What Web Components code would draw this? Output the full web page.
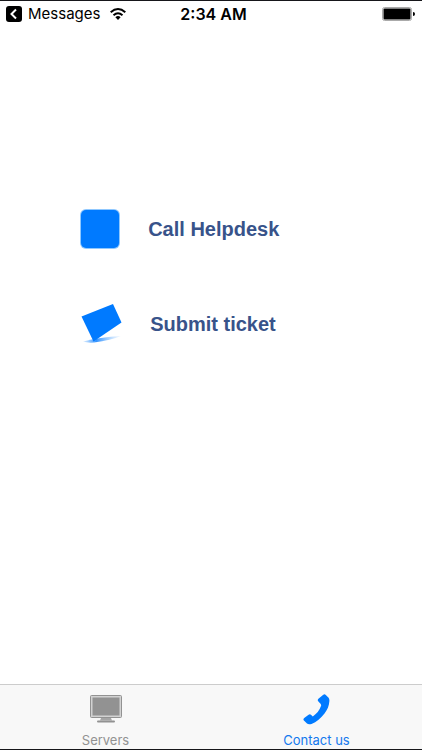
<!DOCTYPE html>
<html lang="en">
<head>
<meta charset="utf-8">
<meta name="viewport" content="width=device-width, initial-scale=1">
<title>Contact us</title>
<style>
html, body { margin: 0; }
body { font-family: Inter, "Liberation Sans", sans-serif; background: #fff; }
</style>
</head>
<body>
<helpdesk-app></helpdesk-app>
<script>
const icons = {
  square: `<svg width="40" height="40" viewBox="0 0 40 40" aria-hidden="true"><rect width="40" height="40" rx="6" fill="#8fc8ff"/><rect x="1" y="1" width="38" height="38" rx="5" fill="#007aff"/></svg>`,
  ticket: `<svg width="42" height="40" viewBox="0 0 42 40" aria-hidden="true"><defs><linearGradient id="g"><stop offset="0" stop-color="#7dbcff" stop-opacity=".3"/><stop offset=".35" stop-color="#2f91ff"/><stop offset="1" stop-color="#b5d9ff" stop-opacity=".2"/></linearGradient></defs><path d="M3 37.500Q20 33 41 32Q31 36 14 38.500Q7 39 3 37.500Z" fill="url(#g)"/><path d="M1.500 12.500L33 0L41.500 18.500L13.500 37.500Z" fill="#007aff"/></svg>`,
  monitor: `<svg width="32" height="28" viewBox="0 0 32 28" aria-hidden="true"><rect x=".5" y=".5" width="31" height="22" rx="1" fill="#d2d2d2" stroke="#929292"/><rect x="2.500" y="2.500" width="27" height="18" fill="#929292"/><path d="M11 23H21L22 25.500H10Z" fill="#a5a5a5"/><rect x="7" y="25.500" width="18" height="2" rx="1" fill="#929292"/></svg>`,
  phone: `<svg width="28" height="31" viewBox="0 0 28 31" aria-hidden="true"><path d="M15.400 4.800L20.300 .7Q21.600 -.2 22.800 .9L25.600 3.700Q26.500 4.800 26.400 7C26 12 24.500 15.500 21.500 19.500C18 24 13.500 28.200 8.500 29.900Q5.600 30.900 4 29.600L.9 26.500Q-.2 25.200 1.200 24L5.600 20.700Q7 19.800 8.200 21L9.800 22.400C13.500 20 16.500 16.500 18.100 11.800Q18.300 10.700 17.500 9.800L15.200 7.300Q14.200 6 15.400 4.800Z" fill="#007aff"/></svg>`
};
function define(name, html, setup) {
  customElements.define(name, class extends HTMLElement {
    constructor() {
      super();
      this.attachShadow({ mode: "open" }).innerHTML = html;
    }
    connectedCallback() { if (setup) setup(this, this.shadowRoot); }
  });
}
const setIcon = (host, root) => { root.querySelector(".icon").innerHTML = icons[host.getAttribute("icon")]; };

define("status-bar", `
<style>
:host { display: grid; grid-template-columns: 1fr auto 1fr; align-items: center; height: 28px; padding: 0 1px 2px 6px; color: #000; border-top: 1px solid #16161a; box-sizing: border-box; }
.back { display: flex; align-items: center; gap: 5px; }
button { display: flex; align-items: center; gap: 6px; border: 0; padding: 0; background: none; color: inherit; font: 400 15px/20px Inter, sans-serif; }
svg { display: block; }
.time { font-size: 16px; font-weight: 600; line-height: 20px; }
.battery { justify-self: end; margin-right: 6px; }
</style>
<div class="back">
  <button type="button"><svg width="16" height="16" viewBox="0 0 16 16" aria-hidden="true"><rect width="16" height="16" rx="3" fill="#000"/><path d="M10 3.500L5.500 8L10 12.500" fill="none" stroke="#fff" stroke-width="2"/></svg>Messages</button>
  <svg width="26" height="14" viewBox="-5 0 26 14" aria-label="Wi-Fi" role="img"><g fill="none" stroke="#000" stroke-width="2"><path d="M.7 5.200Q8 -1.200 15.300 5.200"/><path d="M3.500 8.200Q8 4.300 12.500 8.200"/></g><path d="M5.400 10.200Q8 8 10.600 10.200L8 13Z"/></svg>
</div>
<span class="time">2:34 AM</span>
<svg class="battery" width="33" height="14" viewBox="0 0 33 14" role="img" aria-label="Battery full"><rect x=".5" y=".5" width="29" height="13" rx="2" fill="#fff" stroke="#aaa"/><rect x="1.500" y="1.500" width="27" height="11" rx="1"/><path d="M31 5Q33 5 33 7Q33 9 31 9Z"/></svg>`);

define("contact-action", `
<style>
:host { display: block; }
button { display: flex; align-items: center; gap: 28px; border: 0; padding: 0; background: none; color: #38538a; font: 700 20px/24px "Liberation Sans", Arial, sans-serif; }
svg { display: block; }
</style>
<button type="button"><span class="icon"></span><span><slot></slot></span></button>`, setIcon);

define("tab-item", `
<style>
:host { display: block; flex: 1; }
button { display: flex; flex-direction: column; align-items: center; justify-content: space-between; width: 100%; height: 100%; border: 0; padding: 8px 0 1px; background: none; color: #929292; font: 400 13px/16px Inter, sans-serif; }
:host([selected]) button { color: #1479ee; }
.icon { display: grid; place-items: center; height: 32px; }
svg { display: block; }
</style>
<button type="button"><span class="icon"></span><span><slot></slot></span></button>`, (host, root) => {
  setIcon(host, root);
  if (host.hasAttribute("selected")) root.querySelector("button").setAttribute("aria-current", "page");
});

define("tab-bar", `
<style>
:host { display: flex; height: 66px; box-sizing: border-box; border-top: 1px solid #ccc; border-bottom: 1px solid #16161a; background: #f8f8f8; }
</style><slot></slot>`);

define("helpdesk-app", `
<style>
:host { display: flex; flex-direction: column; min-height: 100vh; }
main { flex: 1; display: flex; flex-direction: column; align-items: flex-start; gap: 55px; padding: 181px 19% 0; }
</style>
<status-bar></status-bar>
<main>
  <contact-action icon="square">Call Helpdesk</contact-action>
  <contact-action icon="ticket">Submit ticket</contact-action>
</main>
<tab-bar role="navigation">
  <tab-item icon="monitor">Servers</tab-item>
  <tab-item icon="phone" selected>Contact us</tab-item>
</tab-bar>`);
</script>
</body>
</html>
